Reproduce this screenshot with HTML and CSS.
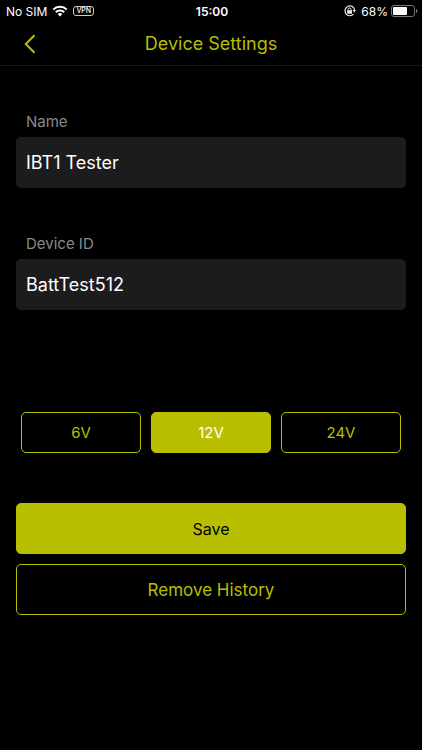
FILE: index.html
```html
<!DOCTYPE html>
<html lang="en">
<head>
<meta charset="utf-8">
<meta name="viewport" content="width=device-width, initial-scale=1">
<title>Device Settings</title>
<link rel="stylesheet" href="styles.css">
</head>
<body>
<div class="status">
  <div class="status-side">
    <span>No SIM</span>
    <svg class="wifi" width="16" height="12" viewBox="0 0 16 12" aria-hidden="true">
      <g fill="none" stroke="#fff" stroke-width="2">
        <path d="M1.3 4.5a9.6 9.6 0 0 1 13.4 0"/>
        <path d="M3.8 7.2a6 6 0 0 1 8.4 0"/>
      </g>
      <path fill="#fff" d="M5.6 9.1a3.5 3.5 0 0 1 4.8 0L8 11.6z"/>
    </svg>
    <span class="vpn">VPN</span>
  </div>
  <time class="clock">15:00</time>
  <div class="status-side status-right">
    <svg class="lock" width="12" height="12" viewBox="0 0 12 12" aria-hidden="true">
      <path fill="none" stroke="#eee" stroke-width="1.200" d="M9.500 2.500A4.900 4.900 0 1 0 9.500 9.200M9.500 2.500a4.900 4.900 0 0 1 1 2.500"/>
      <path fill="#eee" d="M8.600 5h3.400l-1.700 2.400zM3.200 5.200h4.800v3.600h-4.800z"/>
      <path fill="none" stroke="#eee" d="M4.200 5.500V4.300a1.400 1.400 0 0 1 2.800 0v1.200"/>
    </svg>
    <span>68%</span>
    <svg class="battery" width="27" height="12" viewBox="0 0 27 12" aria-hidden="true">
      <rect x=".5" y=".5" width="23" height="11" rx="2.500" fill="none" stroke="#777"/>
      <rect x="2" y="2" width="14" height="8" rx="1" fill="#fff"/>
      <path fill="#777" d="M25 4c1.900.5 1.900 3.500 0 4z"/>
    </svg>
  </div>
</div>
<header class="bar">
  <button class="back" type="button" aria-label="Back">
    <svg width="12" height="20" viewBox="0 0 12 20" aria-hidden="true">
      <path d="M10.500 1.200L1.800 10l8.700 8.800" fill="none" stroke="#b8be00" stroke-width="2"/>
    </svg>
  </button>
  <h1>Device Settings</h1>
</header>
<main>
  <form class="form">
    <div class="field">
      <label for="name">Name</label>
      <input id="name" type="text" value="IBT1 Tester">
    </div>
    <div class="field">
      <label for="device">Device ID</label>
      <input id="device" type="text" value="BattTest512">
    </div>
    <div class="volts" role="radiogroup" aria-label="Voltage">
      <label class="volt"><input type="radio" name="volt" value="6"><span>6V</span></label>
      <label class="volt"><input type="radio" name="volt" value="12" checked><span>12V</span></label>
      <label class="volt"><input type="radio" name="volt" value="24"><span>24V</span></label>
    </div>
    <div class="actions">
      <button class="save" type="button">Save</button>
      <button class="remove" type="button">Remove History</button>
    </div>
  </form>
</main>
</body>
</html>
```
FILE: styles.css
```css
* { box-sizing: border-box; }
body {
  margin: 0;
  min-height: 100vh;
  background: #000;
  color: #fff;
  font-family: Inter, "Liberation Sans", sans-serif;
}
button, input { font: inherit; }
.status {
  display: grid;
  grid-template-columns: 1fr auto 1fr;
  align-items: center;
  height: 22px;
  padding: 0 4px 0 6px;
  font-size: 12px;
}
.status-side { display: flex; align-items: center; gap: 5px; }
.status-right { justify-content: flex-end; }
.status-right .battery { margin-left: -2px; }
.clock { font-weight: 600; }
.vpn {
  padding: 0 2px;
  border: 1px solid #ccc;
  border-radius: 3px;
  font-size: 7px;
  line-height: 8px;
  font-weight: 500;
}
.bar {
  display: grid;
  grid-template-columns: 44px 1fr 44px;
  align-items: center;
  height: 44px;
  padding: 0 8px;
  border-bottom: 1px solid #17181a;
}
.bar h1 {
  margin: 0;
  text-align: center;
  font-size: 18px;
  line-height: 24px;
  font-weight: 400;
  color: #b8be00;
}
.back {
  display: flex;
  align-items: center;
  justify-content: center;
  height: 40px;
  padding: 0;
  border: 0;
  background: none;
}
main { padding: 46px 16px; }
.field { margin-bottom: 46px; }
.field label {
  display: block;
  margin: 0 10px 5px;
  font-size: 15px;
  line-height: 20px;
  color: #8a8a8a;
}
.field input {
  display: block;
  width: 100%;
  height: 51px;
  padding: 0 10px;
  border: 0;
  border-radius: 5px;
  background: #1c1c1e;
  color: #fff;
  font-size: 18px;
}
.volts {
  display: grid;
  grid-template-columns: repeat(3, 1fr);
  gap: 10px;
  margin: 102px 5px 50px;
}
.volt { position: relative; }
.volt input {
  position: absolute;
  inset: 0;
  width: 100%;
  height: 100%;
  margin: 0;
  opacity: 0;
}
.volt span {
  display: block;
  border: 1px solid #b8be00;
  border-radius: 5px;
  text-align: center;
  font-size: 15px;
  line-height: 39px;
  color: #b8be00;
}
.volt input:checked + span { background: #b8be00; color: #fff; }
.actions { display: grid; gap: 10px; }
.actions button {
  height: 51px;
  border: 1px solid #b8be00;
  border-radius: 5px;
}
.actions .save { background: #b8be00; color: #000; font-size: 16px; }
.actions .remove { background: none; color: #b8be00; font-size: 17px; }
```
